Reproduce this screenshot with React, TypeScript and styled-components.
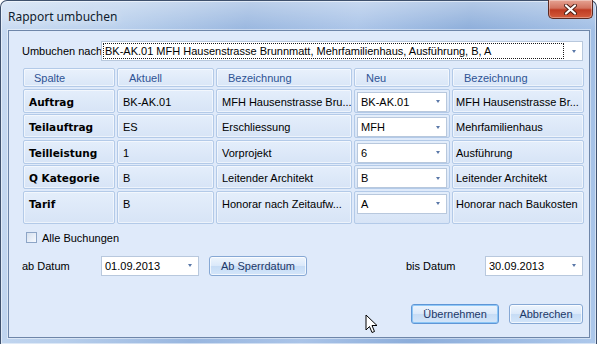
import React from 'react';
import styled, { createGlobalStyle } from 'styled-components';

const GlobalStyle = createGlobalStyle`
  html, body {
    margin: 0;
    padding: 0;
    background: #ffffff;
  }
  body {
    font-family: "Liberation Sans", Arial, sans-serif;
    font-size: 11px;
    color: #000;
  }
`;

const Window = styled.div`
  position: relative;
  box-sizing: border-box;
  width: 597px;
  height: 344px;
  display: flex;
  flex-direction: column;
  border: 1px solid #3f516d;
  border-bottom: none;
  border-radius: 7px 7px 0 0;
  background:
    linear-gradient(to bottom, rgba(255, 255, 255, 0.35), rgba(255, 255, 255, 0) 30px),
    linear-gradient(100deg, #c9dbf2 0%, #b8cfec 18%, #98b6df 38%, #aac4e8 55%, #8cadda 72%, #adc8eb 100%);
  box-shadow: inset 0 0 0 1px rgba(255, 255, 255, 0.5);
`;

const TitleBar = styled.div`
  height: 29px;
  display: flex;
  align-items: flex-start;
  justify-content: space-between;
  padding-left: 7px;
`;

const Title = styled.span`
  margin-top: 7px;
  font-family: "Noto Sans", "Liberation Sans", sans-serif;
  font-size: 12px;
  color: #0f1c2e;
  text-shadow: 0 0 8px rgba(255, 255, 255, 0.9);
`;

const CloseButton = styled.div`
  width: 45px;
  height: 19px;
  margin-right: 3px;
  margin-top: -1px;
  box-sizing: border-box;
  border: 1px solid #5b2a22;
  border-top: none;
  border-radius: 0 0 5px 5px;
  background: linear-gradient(to bottom, #e6a393 0%, #d2735f 45%, #bf3b22 55%, #d35c3c 100%);
  box-shadow: inset 0 0 0 1px rgba(255, 255, 255, 0.35);
  display: flex;
  align-items: center;
  justify-content: center;
`;

const Client = styled.div`
  flex: 1;
  margin: 0 6px 6px 7px;
  border: 1px solid #6e86a9;
  box-shadow: 0 0 0 1px rgba(255, 255, 255, 0.45);
  background: #dfeafa;
  padding: 10px 6px 0 13px;
  display: flex;
  flex-direction: column;
`;

const Row = styled.div<{ $top?: number }>`
  display: flex;
  align-items: center;
  margin-top: ${(p) => p.$top ?? 0}px;
`;

const Label = styled.span<{ $w?: number }>`
  width: ${(p) => p.$w ?? 79}px;
  flex: none;
  white-space: nowrap;
  color: #000;
`;

const Combo = styled.div<{ $w?: number; $h?: number }>`
  box-sizing: border-box;
  ${(p) => (p.$w ? `width: ${p.$w}px; flex: none;` : 'flex: 1; min-width: 0;')}
  height: ${(p) => p.$h ?? 20}px;
  background: #ffffff;
  border: 1px solid #b8c8dd;
  display: flex;
  align-items: center;
  padding: 1px;
`;

const ComboText = styled.span<{ $focus?: boolean }>`
  flex: 1;
  align-self: stretch;
  display: flex;
  align-items: center;
  padding-left: 2px;
  white-space: nowrap;
  overflow: hidden;
  outline: ${(p) => (p.$focus ? '1px dotted #1a1a1a' : 'none')};
  outline-offset: -1px;
  margin-right: ${(p) => (p.$focus ? 4 : 0)}px;
`;

const Arrow = styled.span`
  width: 0;
  height: 0;
  margin: 0 5px 0 4px;
  border-left: 2.5px solid transparent;
  border-right: 2.5px solid transparent;
  border-top: 3px solid #5a78a8;
`;

const Grid = styled.div`
  display: grid;
  grid-template-columns: 92px 97px 136px 96px 132px;
  grid-template-rows: 19px 24px 24px 24px 24px 33px;
  column-gap: 2px;
  row-gap: 1.5px;
  margin: 7px 0 0 1px;
`;

const Cell = styled.div<{ $head?: boolean; $bold?: boolean; $pad?: number }>`
  box-sizing: border-box;
  border: 1px solid #b3cae8;
  border-radius: 2px;
  background: ${(p) =>
    p.$head
      ? 'linear-gradient(to bottom, #e9f1fc, #d9e6f7)'
      : 'linear-gradient(to bottom, #e4eefb, #d7e4f6)'};
  box-shadow: inset 0 0 0 1px rgba(255, 255, 255, 0.55);
  padding: ${(p) => (p.$head ? '3px 0 0' : '6px 0 0')} ${(p) => p.$pad ?? 5}px;
  font-family: ${(p) => (p.$bold ? '"DejaVu Sans", "Liberation Sans", sans-serif' : 'inherit')};
  font-size: ${(p) => (p.$bold ? '10.5px' : '11px')};
  font-weight: ${(p) => (p.$bold ? 'bold' : 'normal')};
  color: ${(p) => (p.$head ? '#2e5394' : '#000')};
  white-space: nowrap;
  overflow: hidden;
`;

const EditCell = styled.div`
  box-sizing: border-box;
  border: 1px solid #b3cae8;
  border-radius: 2px;
  background: linear-gradient(to bottom, #e4eefb, #d7e4f6);
  padding: 2px 2px 0;
`;

const CheckRow = styled.label`
  display: flex;
  align-items: center;
  gap: 5px;
  margin: 8px 0 0 4px;
`;

const CheckBox = styled.span`
  box-sizing: border-box;
  width: 11px;
  height: 11px;
  border: 1px solid #8da5c6;
  background: linear-gradient(135deg, #d6e1ef, #f7faff);
`;

const Spacer = styled.div`
  flex: 1;
`;

const Button = styled.div<{ $w: number; $default?: boolean }>`
  box-sizing: border-box;
  width: ${(p) => p.$w}px;
  height: 20px;
  flex: none;
  display: flex;
  align-items: center;
  justify-content: center;
  border: 1px solid ${(p) => (p.$default ? '#5f96d6' : '#86a8d4')};
  border-radius: 3px;
  background: linear-gradient(to bottom, #eef5fd 0%, #dbe9fa 48%, #c6dcf5 52%, #d4e6fa 100%);
  box-shadow: inset 0 0 0 1px ${(p) => (p.$default ? 'rgba(120, 190, 245, 0.8)' : 'rgba(255, 255, 255, 0.7)')};
  color: #1d3867;
`;

const ButtonRow = styled.div`
  display: flex;
  justify-content: flex-end;
  gap: 10px;
  margin-top: 28px;
`;

const Cursor = styled.svg`
  position: absolute;
  left: 364px;
  top: 313px;
`;

type Row = {
  spalte: string;
  aktuell: string;
  bez1: string;
  neu: string;
  bez2: string;
};

const rows: Row[] = [
  { spalte: 'Auftrag', aktuell: 'BK-AK.01', bez1: 'MFH Hausenstrasse Bru...', neu: 'BK-AK.01', bez2: 'MFH Hausenstrasse Br...' },
  { spalte: 'Teilauftrag', aktuell: 'ES', bez1: 'Erschliessung', neu: 'MFH', bez2: 'Mehrfamilienhaus' },
  { spalte: 'Teilleistung', aktuell: '1', bez1: 'Vorprojekt', neu: '6', bez2: 'Ausführung' },
  { spalte: 'Q Kategorie', aktuell: 'B', bez1: 'Leitender Architekt', neu: 'B', bez2: 'Leitender Architekt' },
  { spalte: 'Tarif', aktuell: 'B', bez1: 'Honorar nach Zeitaufw...', neu: 'A', bez2: 'Honorar nach Baukosten' }
];

const headers = ['Spalte', 'Aktuell', 'Bezeichnung', 'Neu', 'Bezeichnung'];

export default function App () {
  return (
    <>
      <GlobalStyle />
      <Window>
        <TitleBar>
          <Title>Rapport umbuchen</Title>
          <CloseButton>
            <svg width='13' height='11' viewBox='0 0 13 11'>
              <path d='M2 1.5 L11 9.5 M11 1.5 L2 9.5' stroke='#4a1d14' strokeWidth='4' strokeLinecap='round' />
              <path d='M2 1.5 L11 9.5 M11 1.5 L2 9.5' stroke='#ffffff' strokeWidth='2.2' strokeLinecap='round' />
            </svg>
          </CloseButton>
        </TitleBar>
        <Client>
          <Row>
            <Label>Umbuchen nach</Label>
            <Combo>
              <ComboText $focus>BK-AK.01 MFH Hausenstrasse Brunnmatt, Mehrfamilienhaus, Ausführung, B, A</ComboText>
              <Arrow />
            </Combo>
          </Row>
          <Grid>
            {headers.map((h, i) => (
              <Cell $head $pad={i === 0 ? 10 : 11} key={'h' + i}>{h}</Cell>
            ))}
            {rows.map((r) => (
              <React.Fragment key={r.spalte}>
                <Cell $bold>{r.spalte}</Cell>
                <Cell>{r.aktuell}</Cell>
                <Cell>{r.bez1}</Cell>
                <EditCell>
                  <Combo $h={20}>
                    <ComboText>{r.neu}</ComboText>
                    <Arrow />
                  </Combo>
                </EditCell>
                <Cell $pad={3}>{r.bez2}</Cell>
              </React.Fragment>
            ))}
          </Grid>
          <CheckRow>
            <CheckBox />
            Alle Buchungen
          </CheckRow>
          <Row $top={12}>
            <Label>ab Datum</Label>
            <Combo $w={98}>
              <ComboText>01.09.2013</ComboText>
              <Arrow />
            </Combo>
            <Button $w={98} style={{ marginLeft: 10 }}>Ab Sperrdatum</Button>
            <Spacer />
            <Label>bis Datum</Label>
            <Combo $w={98}>
              <ComboText>30.09.2013</ComboText>
              <Arrow />
            </Combo>
          </Row>
          <ButtonRow>
            <Button $w={88} $default>Übernehmen</Button>
            <Button $w={74}>Abbrechen</Button>
          </ButtonRow>
        </Client>
        <Cursor width='13' height='20' viewBox='0 0 13 20'>
          <path d='M1 1 L1 16 L4.5 12.5 L7 18.5 L9.5 17.5 L7 11.5 L12 11.5 Z' fill='#ffffff' stroke='#000000' strokeWidth='1' strokeLinejoin='miter' />
        </Cursor>
      </Window>
    </>
  );
}
